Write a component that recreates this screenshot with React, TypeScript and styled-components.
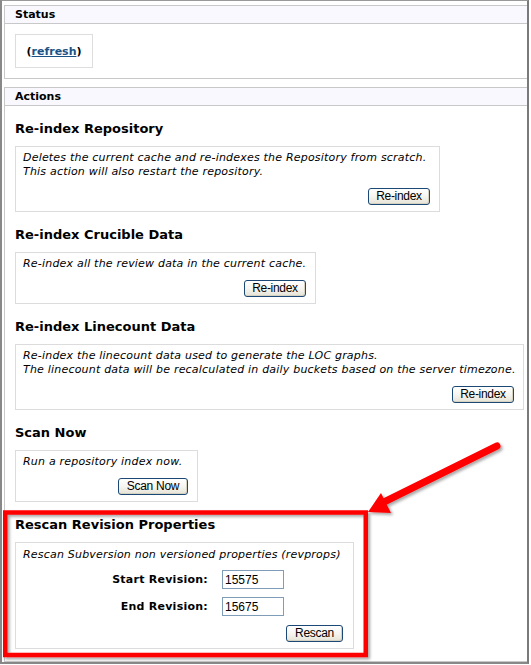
import React from "react";
import styled, { createGlobalStyle } from "styled-components";

const GlobalStyle = createGlobalStyle`
  html, body { margin: 0; padding: 0; background: #ffffff; }
  * { box-sizing: border-box; }
`;

const Page = styled.div`
  position: relative;
  width: 531px;
  height: 665px;
  background: #fff;
`;

const Frame = styled.div`
  width: 529px;
  height: 664px;
  border-top: 1px solid #999;
  border-left: 2px solid #888;
  border-right: 2px solid #7a7a7a;
  border-bottom: 2px solid #888;
  padding: 4px 0 0 2px;
  display: flex;
  flex-direction: column;
  gap: 8px;
  overflow: hidden;
  font-family: "DejaVu Sans", Verdana, sans-serif;
  color: #000;
`;

const Panel = styled.section`
  border: 1px solid #c8c8c8;
  border-right: none;
  background: #fff;
  flex: ${(p: { $grow?: boolean }) => (p.$grow ? "1" : "none")};
`;

const PanelHeader = styled.div`
  height: 18px;
  line-height: 17px;
  background: #f8f8fe;
  border-bottom: 1px solid #c8c8c8;
  padding-left: 10px;
  font-size: 11px;
  font-weight: bold;
`;

const StatusBody = styled.div`
  padding: 10px 10px 10px;
`;

const RefreshBox = styled.div`
  width: 78px;
  height: 34px;
  border: 1px solid #ddd;
  display: flex;
  align-items: center;
  justify-content: center;
  font-size: 11px;
  font-weight: bold;
`;

const Link = styled.a`
  color: #1b5286;
  text-decoration: underline;
`;

const ActionsBody = styled.div`
  padding: 0 10px 8px;
`;

const Heading = styled.h3`
  margin: 15px 0 9px;
  font-size: 13px;
  line-height: 16px;
  font-weight: bold;
  white-space: nowrap;
`;

const Box = styled.div<{ $w: number; $pr?: number }>`
  width: ${(p) => p.$w}px;
  border: 1px solid #dcdcdc;
  padding: 4px ${(p) => p.$pr ?? 9}px 6px 7px;
`;

const Desc = styled.p`
  margin: 0;
  font-size: 11px;
  line-height: 14px;
  font-style: italic;
  letter-spacing: 0.2px;
  white-space: nowrap;
`;

const ButtonRow = styled.div`
  display: flex;
  justify-content: flex-end;
  margin-top: 9px;
`;

const Button = styled.button<{ $w: number }>`
  width: ${(p) => p.$w}px;
  height: 17px;
  padding: 0;
  border: 1px solid #1c4876;
  border-radius: 3px;
  background: linear-gradient(#ffffff 0%, #f6f5f0 50%, #e6e3d6 100%);
  font-family: "Liberation Sans", Arial, sans-serif;
  font-size: 12px;
  letter-spacing: -0.3px;
  line-height: 15px;
  color: #000;
  box-shadow: inset -1px -1px 0 #d6d2c2;
`;

const Form = styled.div`
  display: grid;
  grid-template-columns: 192px 62px;
  column-gap: 14px;
  row-gap: 8px;
  margin: 8px 0 0 -7px;
  align-items: center;
`;

const Label = styled.label`
  text-align: right;
  font-size: 11px;
  font-weight: bold;
  letter-spacing: 0.25px;
  white-space: nowrap;
`;

const Input = styled.input`
  width: 62px;
  height: 19px;
  border: 1px solid #7f9db9;
  padding: 0 2px;
  font-family: "Liberation Sans", Arial, sans-serif;
  font-size: 12px;
  color: #000;
  outline: none;
`;

const Overlay = styled.svg`
  position: absolute;
  left: 0;
  top: 0;
  width: 531px;
  height: 665px;
  pointer-events: none;
`;

type ActionProps = {
  title: string;
  lines: string[];
  width: number;
  button: string;
  buttonWidth: number;
};

const Action = ({ title, lines, width, button, buttonWidth }: ActionProps) => (
  <div>
    <Heading>{title}</Heading>
    <Box $w={width}>
      {lines.map((l) => (
        <Desc key={l}>{l}</Desc>
      ))}
      <ButtonRow>
        <Button $w={buttonWidth}>{button}</Button>
      </ButtonRow>
    </Box>
  </div>
);

export default function App() {
  return (
    <Page>
      <GlobalStyle />
      <Frame>
        <Panel>
          <PanelHeader>Status</PanelHeader>
          <StatusBody>
            <RefreshBox>
              (<Link href="#">refresh</Link>)
            </RefreshBox>
          </StatusBody>
        </Panel>
        <Panel $grow>
          <PanelHeader>Actions</PanelHeader>
          <ActionsBody>
            <Action
              title="Re-index Repository"
              lines={[
                "Deletes the current cache and re-indexes the Repository from scratch.",
                "This action will also restart the repository.",
              ]}
              width={425}
              button="Re-index"
              buttonWidth={62}
            />
            <Action
              title="Re-index Crucible Data"
              lines={["Re-index all the review data in the current cache."]}
              width={301}
              button="Re-index"
              buttonWidth={62}
            />
            <Action
              title="Re-index Linecount Data"
              lines={[
                "Re-index the linecount data used to generate the LOC graphs.",
                "The linecount data will be recalculated in daily buckets based on the server timezone.",
              ]}
              width={509}
              button="Re-index"
              buttonWidth={62}
            />
            <Action
              title="Scan Now"
              lines={["Run a repository index now."]}
              width={183}
              button="Scan Now"
              buttonWidth={70}
            />
            <div>
              <Heading>Rescan Revision Properties</Heading>
              <Box $w={339} $pr={10}>
                <Desc style={{ marginTop: 1 }}>
                  Rescan Subversion non versioned properties (revprops)
                </Desc>
                <Form>
                  <Label>Start Revision:</Label>
                  <Input defaultValue="15575" />
                  <Label>End Revision:</Label>
                  <Input defaultValue="15675" />
                </Form>
                <ButtonRow>
                  <Button $w={57}>Rescan</Button>
                </ButtonRow>
              </Box>
            </div>
          </ActionsBody>
        </Panel>
      </Frame>
      <Overlay viewBox="0 0 531 665">
        <defs>
          <filter id="shadow" x="-10%" y="-10%" width="130%" height="130%">
            <feDropShadow dx="2" dy="2" stdDeviation="1.5" floodColor="#000" floodOpacity="0.35" />
          </filter>
        </defs>
        <g filter="url(#shadow)">
          <rect x="5.25" y="512.5" width="360.5" height="142.5" fill="none" stroke="#ff0000" strokeWidth="4.5" />
          <line x1="497" y1="446" x2="384" y2="502" stroke="#ff0000" strokeWidth="7" strokeLinecap="round" />
          <polygon points="368,512 381,493 391,513" fill="#ff0000" />
        </g>
      </Overlay>
    </Page>
  );
}
